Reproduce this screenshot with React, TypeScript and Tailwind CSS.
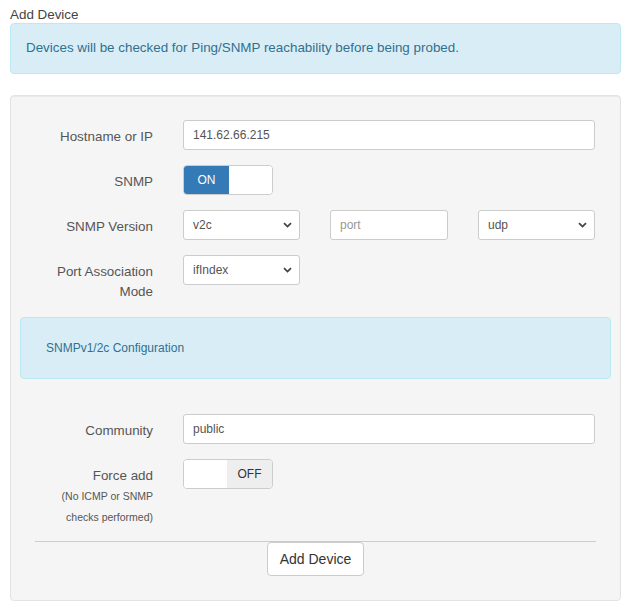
import React from "react";

const font = { fontFamily: '"Liberation Sans", Arial, sans-serif' };

function Chevron() {
  return (
    <svg
      className="pointer-events-none absolute right-[8px] top-1/2 -translate-y-1/2"
      width="9"
      height="6"
      viewBox="0 0 9 6"
    >
      <path d="M1 1.2 L4.5 4.6 L8 1.2" fill="none" stroke="#444" strokeWidth="1.8" />
    </svg>
  );
}

function Select({ value, options }: { value: string; options: string[] }) {
  return (
    <div className="relative w-[117px]">
      <select
        defaultValue={value}
        className="h-[30px] w-full appearance-none rounded-[3px] border border-[#ccc] bg-white pl-[9px] pr-6 text-[12px] text-[#555] outline-none"
      >
        {options.map((o) => (
          <option key={o}>{o}</option>
        ))}
      </select>
      <Chevron />
    </div>
  );
}

function Row({ label, children, sub }: { label: React.ReactNode; children: React.ReactNode; sub?: React.ReactNode }) {
  return (
    <div className="flex">
      <div className="w-[123px] shrink-0 pt-[7px] text-right text-[13.4px] leading-[20px] text-[#555]">
        {label}
        {sub}
      </div>
      <div className="ml-[30px] w-[412px]">{children}</div>
    </div>
  );
}

function Toggle({ on }: { on: boolean }) {
  return (
    <div className="flex h-[30px] w-[90px] overflow-hidden rounded-[4px] border border-[#ccc] bg-white text-[12px]">
      {on ? (
        <>
          <span className="flex w-[45px] items-center justify-center bg-[#337ab7] text-white">ON</span>
          <span className="flex-1 bg-white" />
        </>
      ) : (
        <>
          <span className="flex-1 bg-white" />
          <span className="flex w-[45px] items-center justify-center bg-[#eee] text-[#333]">OFF</span>
        </>
      )}
    </div>
  );
}

const inputCls =
  "h-[30px] w-full rounded-[3px] border border-[#ccc] bg-white px-[9px] text-[12px] text-[#555] outline-none placeholder:text-[#999]";

export default function App() {
  return (
    <div style={font} className="bg-white px-[10px] pb-[12px] text-[#333]">
      <div className="pt-[6px] text-[13.4px] leading-[17px] text-[#444]">Add Device</div>
      <div className="flex h-[51px] items-center rounded-[4px] border border-[#bce8f1] bg-[#d9edf7] px-[15px] text-[13.4px] text-[#31708f]">
        Devices will be checked for Ping/SNMP reachability before being probed.
      </div>

      <div className="mt-[21px] rounded-[4px] border border-[#e3e3e3] bg-[#f5f5f5] px-[9px] pb-[24px] pt-[24px] shadow-[inset_0_1px_1px_rgba(0,0,0,0.05)]">
        <div className="flex flex-col gap-[15px] px-[10px]">
          <Row label="Hostname or IP">
            <input className={inputCls} defaultValue="141.62.66.215" />
          </Row>
          <Row label="SNMP">
            <Toggle on />
          </Row>
          <Row label="SNMP Version">
            <div className="flex justify-between">
              <Select value="v2c" options={["v1", "v2c", "v3"]} />
              <input className={inputCls + " !w-[118px]"} placeholder="port" />
              <Select value="udp" options={["udp", "tcp"]} />
            </div>
          </Row>
          <Row label={<>Port Association<br />Mode</>}>
            <Select value="ifIndex" options={["ifIndex", "ifName", "ifDescr", "ifAlias"]} />
          </Row>
        </div>

        <div className="mt-[15px] flex h-[62px] items-center rounded-[4px] border border-[#bce8f1] bg-[#d9edf7] px-[25px] text-[12px] text-[#31708f]">
          SNMPv1/2c Configuration
        </div>

        <div className="mt-[35px] flex flex-col gap-[15px] px-[10px]">
          <Row label="Community">
            <input className={inputCls} defaultValue="public" />
          </Row>
          <Row
            label="Force add"
            sub={
              <div className="text-[10.5px] leading-[21px]">
                (No ICMP or SNMP
                <br />
                checks performed)
              </div>
            }
          >
            <Toggle on={false} />
          </Row>
        </div>

        <div className="mx-[15px] mt-[13px] border-t border-[#ccc]" />
        <div className="flex justify-center">
          <button className="h-[34px] rounded-[4px] border border-[#ccc] bg-white px-[12px] text-[14px] text-[#333]">
            Add Device
          </button>
        </div>
      </div>
    </div>
  );
}
